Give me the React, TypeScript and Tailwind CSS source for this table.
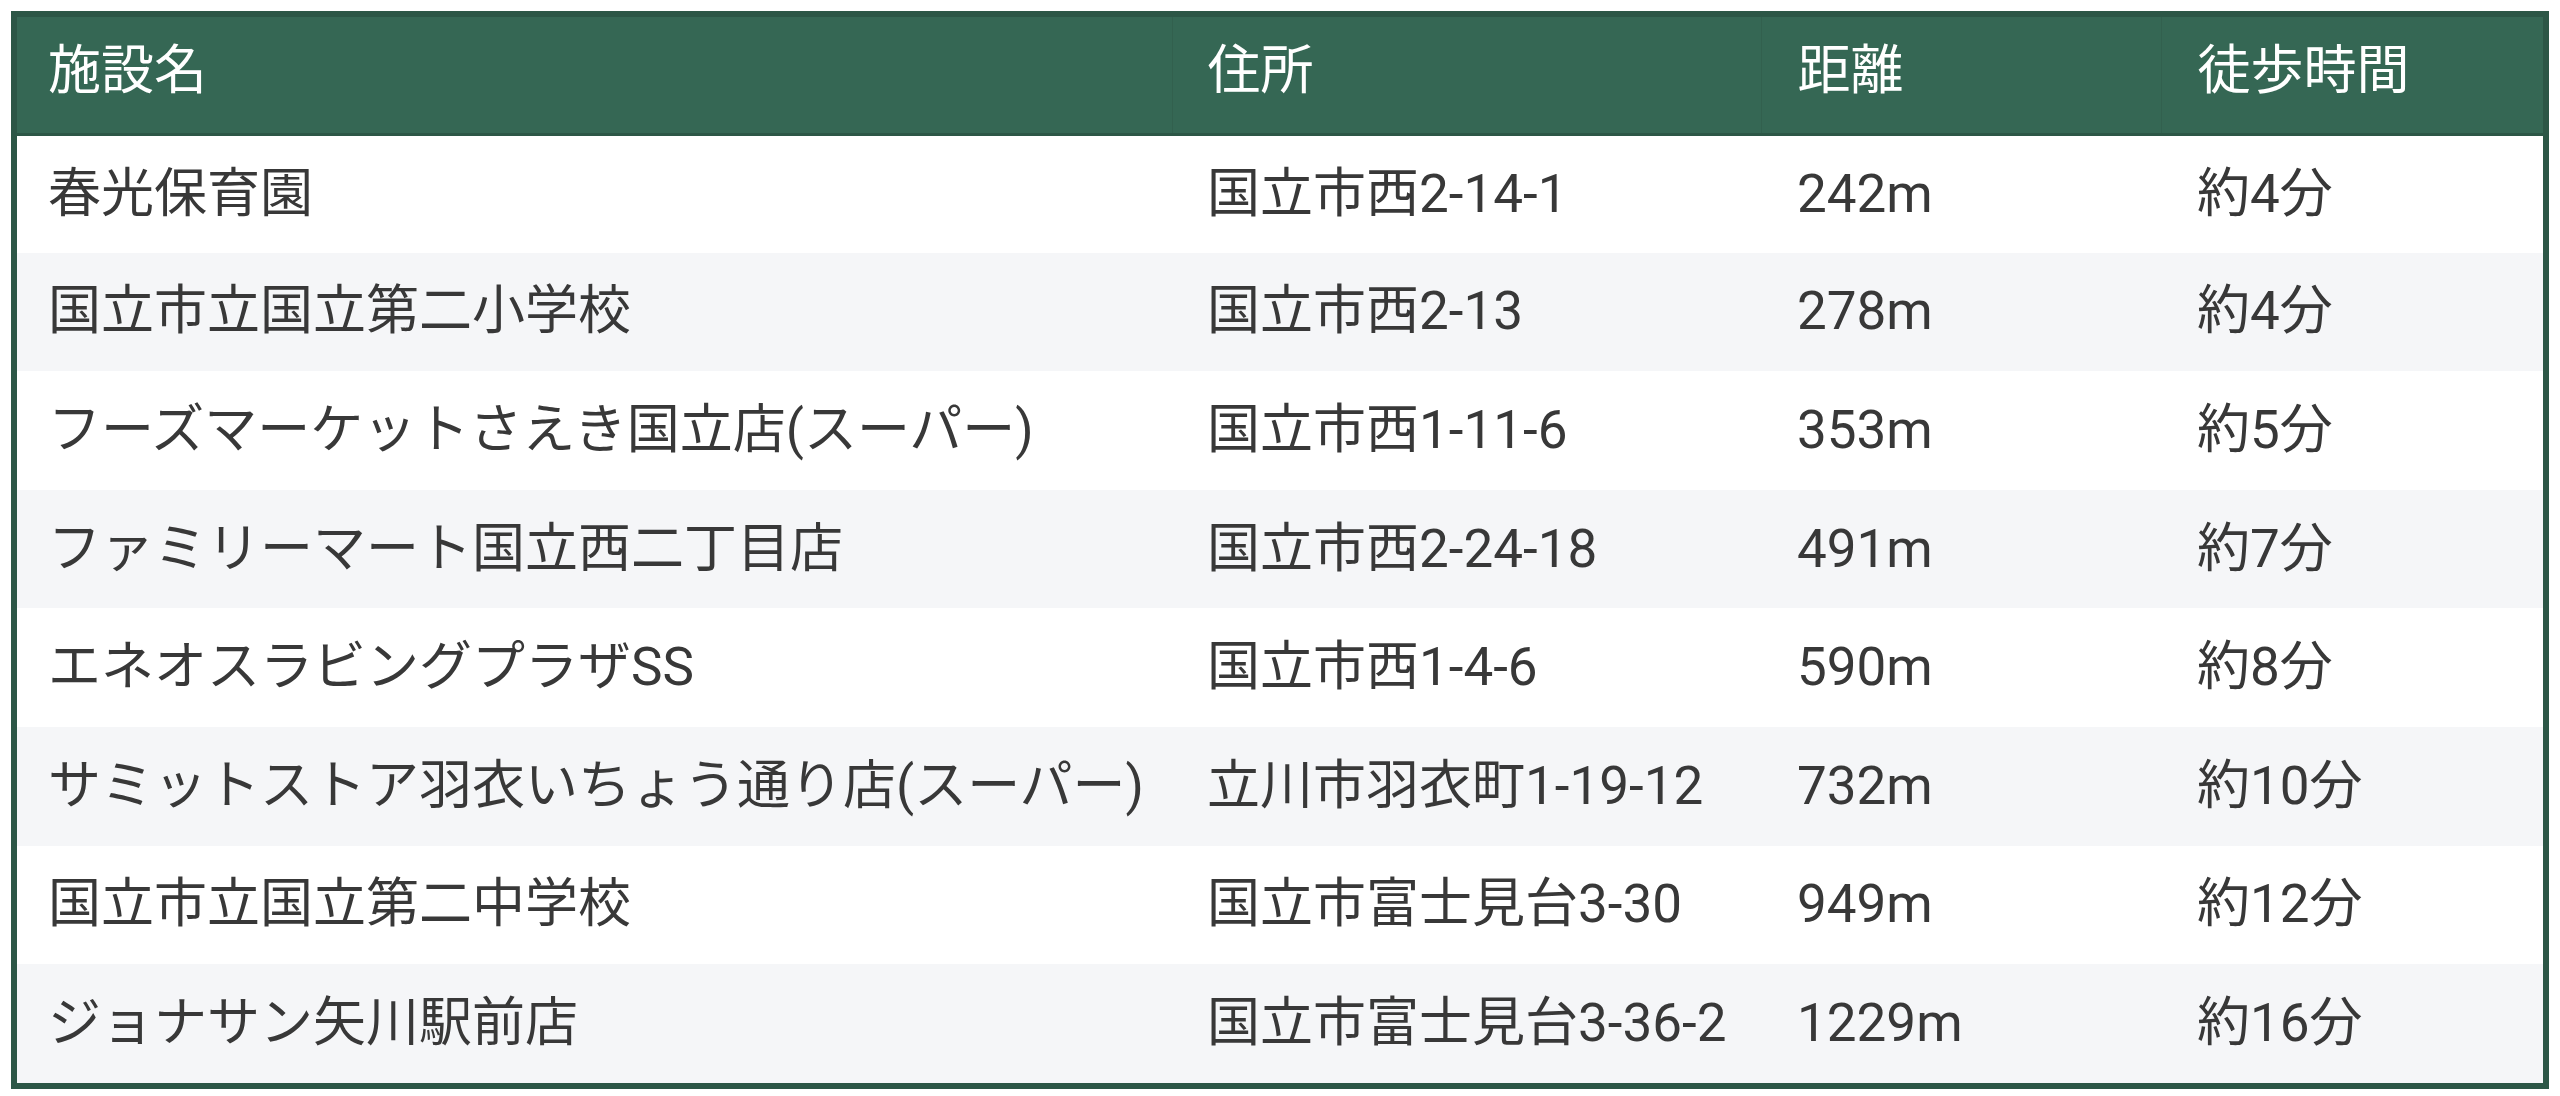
import React from 'react';

const rows = [
  { name: '春光保育園', address: '国立市西2-14-1', distance: '242m', walk: '約4分' },
  { name: '国立市立国立第二小学校', address: '国立市西2-13', distance: '278m', walk: '約4分' },
  { name: 'フーズマーケットさえき国立店(スーパー)', address: '国立市西1-11-6', distance: '353m', walk: '約5分' },
  { name: 'ファミリーマート国立西二丁目店', address: '国立市西2-24-18', distance: '491m', walk: '約7分' },
  { name: 'エネオスラビングプラザSS', address: '国立市西1-4-6', distance: '590m', walk: '約8分' },
  { name: 'サミットストア羽衣いちょう通り店(スーパー)', address: '立川市羽衣町1-19-12', distance: '732m', walk: '約10分' },
  { name: '国立市立国立第二中学校', address: '国立市富士見台3-30', distance: '949m', walk: '約12分' },
  { name: 'ジョナサン矢川駅前店', address: '国立市富士見台3-36-2', distance: '1229m', walk: '約16分' },
];

export default function App() {
  return (
    <div className="bg-white min-h-screen pt-[11px] px-[11px] font-['Roboto','Noto_Sans_CJK_JP',sans-serif]">
      <div className="border-[6px] border-[#2c5646] bg-white">
        <table className="w-full table-fixed border-collapse text-[53px] leading-none">
          <colgroup>
            <col className="w-[1155px]" />
            <col className="w-[589px]" />
            <col className="w-[400px]" />
            <col />
          </colgroup>
          <thead>
            <tr className="bg-[#356754] text-white h-[117px] border-b-[3px] border-[#2c5646]">
              <th className="text-left font-normal pl-[31px] pb-[6px]">施設名</th>
              <th className="text-left font-normal pl-[35px] pb-[6px] border-l border-[#32604e]">住所</th>
              <th className="text-left font-normal pl-[36px] pb-[6px] border-l border-[#32604e]">距離</th>
              <th className="text-left font-normal pl-[36px] pb-[6px] border-l border-[#32604e]">徒歩時間</th>
            </tr>
          </thead>
          <tbody className="text-[#383838]">
            {rows.map((r, i) => (
              <tr key={r.name} className={`h-[118.6px] ${i % 2 === 1 ? 'bg-[#f5f6f8]' : 'bg-white'}`}>
                <td className="pl-[31px] whitespace-nowrap">{r.name}</td>
                <td className="pl-[35px] whitespace-nowrap">{r.address}</td>
                <td className="pl-[36px] whitespace-nowrap">{r.distance}</td>
                <td className="pl-[36px] whitespace-nowrap">{r.walk}</td>
              </tr>
            ))}
          </tbody>
        </table>
      </div>
    </div>
  );
}
